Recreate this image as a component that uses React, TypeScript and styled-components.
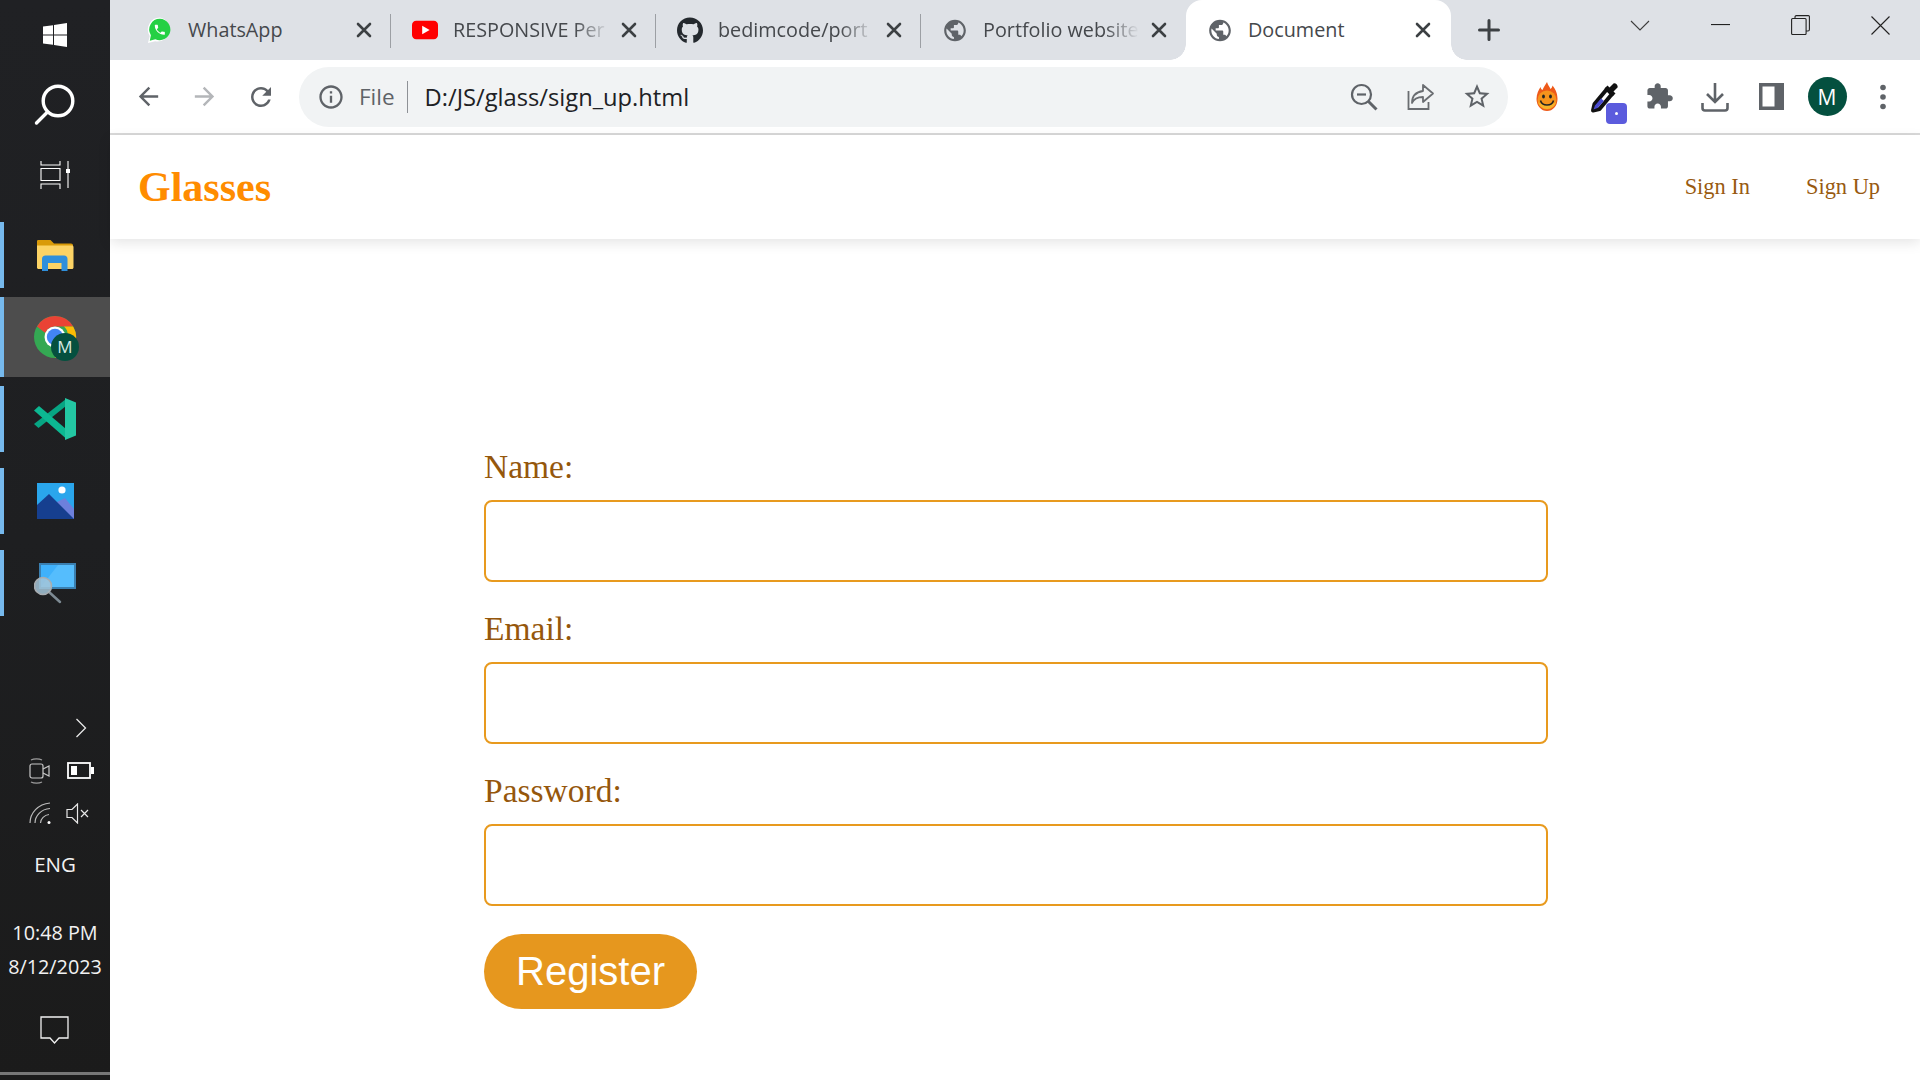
import React from "react";
import styled, { createGlobalStyle } from "styled-components";
import { FaGithub } from "react-icons/fa";

const Global = createGlobalStyle`
  html, body { margin: 0; padding: 0; height: 1080px; overflow: hidden; background: #fff; }
  * { box-sizing: border-box; }
`;

const UI = `"Open Sans", "Noto Sans", sans-serif`;
const SERIF = `"Liberation Serif", "Times New Roman", serif`;

const Desktop = styled.div`
  display: grid;
  grid-template-columns: 110px 1fr;
  width: 1920px;
  height: 1080px;
  overflow: hidden;
`;

/* ---------- Task bar ---------- */
const Rail = styled.aside`
  display: flex;
  flex-direction: column;
  background: linear-gradient(180deg, #202124 0%, #1e1f21 50%, #1b1b1b 100%);
  color: #fff;
  font-family: ${UI};
`;
const SystemButton = styled.div`
  height: 70px;
  display: flex;
  align-items: center;
  justify-content: center;
`;
const Apps = styled.div`
  margin-top: 4px;
  display: flex;
  flex-direction: column;
`;
const AppRow = styled.div`
  height: 82px;
  display: flex;
  align-items: center;
`;
const AppTile = styled.div<{ $active?: boolean }>`
  width: 100%;
  height: ${(p) => (p.$active ? 80 : 66)}px;
  display: flex;
  align-items: center;
  justify-content: center;
  border-left: 4px solid #76b9ed;
  padding-right: 4px;
  background: ${(p) => (p.$active ? "#4d4d4d" : "transparent")};
`;
const Tray = styled.div`
  margin-top: auto;
  display: flex;
  flex-direction: column;
  align-items: center;
`;
const TrayChevron = styled.div`
  width: 100%;
  height: 30px;
  padding-left: 75px;
  display: flex;
  align-items: center;
`;
const TrayRow = styled.div<{ $mt: number; $pr: number }>`
  margin-top: ${(p) => p.$mt}px;
  width: 100%;
  padding: 0 ${(p) => p.$pr}px 0 29px;
  display: flex;
  justify-content: space-between;
  align-items: center;
`;
const Lang = styled.div`
  margin-top: 25px;
  font-size: 20.5px;
  line-height: 28px;
  color: #f2f2f2;
`;
const Clock = styled.div`
  margin-top: 38px;
  font-size: 19.8px;
  line-height: 34px;
  text-align: center;
  color: #f2f2f2;
  white-space: nowrap;
`;
const Notify = styled.div`
  margin-top: 32px;
  height: 30px;
  display: flex;
  justify-content: center;
`;
const RailEnd = styled.div`
  margin-top: 26px;
  width: 100%;
  height: 8px;
  border-top: 3px solid #777;
`;

/* ---------- Browser ---------- */
const Browser = styled.div`
  display: flex;
  flex-direction: column;
  min-width: 0;
  background: #fff;
`;
const TabStrip = styled.div`
  height: 60px;
  flex: none;
  background: #dee1e6;
  display: flex;
  padding-left: 16px;
`;
const Tab = styled.div<{ $active?: boolean }>`
  position: relative;
  width: ${(p) => (p.$active ? 265 : 264)}px;
  height: 60px;
  flex: none;
  display: flex;
  align-items: center;
  padding: 0 ${(p) => (p.$active ? 18 : 16)}px 0 21px;
  background: ${(p) => (p.$active ? "#fff" : "transparent")};
  border-radius: ${(p) => (p.$active ? "16px 16px 0 0" : "0")};
  ${(p) =>
    p.$active
      ? `
    &::before, &::after {
      content: "";
      position: absolute;
      bottom: 0;
      width: 16px;
      height: 16px;
    }
    &::before { left: -16px; background: radial-gradient(circle at 0 0, transparent 15.5px, #fff 16px); }
    &::after { right: -16px; background: radial-gradient(circle at 100% 0, transparent 15.5px, #fff 16px); }
  `
      : ""}
`;
const Favicon = styled.span`
  width: 26px;
  height: 26px;
  flex: none;
  display: flex;
  align-items: center;
  justify-content: center;
  margin-right: 15px;
`;
const TabTitle = styled.span<{ $fade?: boolean }>`
  flex: 1;
  min-width: 0;
  white-space: nowrap;
  font-family: ${UI};
  font-size: 19.8px;
  line-height: 28px;
  color: #45484c;
  ${(p) =>
    p.$fade
      ? `-webkit-mask-image: linear-gradient(90deg, #000 78%, transparent 100%); mask-image: linear-gradient(90deg, #000 78%, transparent 100%);`
      : ""}
`;
const TabClose = styled.span`
  width: 20px;
  height: 20px;
  flex: none;
  margin-left: 10px;
  display: flex;
  align-items: center;
  justify-content: center;
`;
const TabDivider = styled.span<{ $on?: boolean }>`
  width: 1px;
  height: 34px;
  margin-top: 14px;
  flex: none;
  background: ${(p) => (p.$on ? "#9c9fa4" : "transparent")};
`;
const NewTab = styled.div`
  width: 24px;
  height: 60px;
  margin-left: 26px;
  display: flex;
  align-items: center;
  justify-content: center;
`;
const WindowControls = styled.div`
  margin-left: auto;
  display: flex;
  height: 50px;
  align-items: center;
`;
const WinButton = styled.div`
  width: 80px;
  display: flex;
  justify-content: center;
`;

const Toolbar = styled.div`
  height: 75px;
  flex: none;
  border-bottom: 2px solid #d9d9d9;
  display: flex;
  align-items: center;
  padding-left: 13px;
  background: #fff;
`;
const NavButtons = styled.div`
  display: flex;
  gap: 6.5px;
`;
const NavButton = styled.div`
  width: 50px;
  height: 50px;
  display: flex;
  align-items: center;
  justify-content: center;
`;
const Omnibox = styled.div`
  width: 1209px;
  height: 60px;
  flex: none;
  margin-left: 13px;
  border-radius: 30px;
  background: #f1f3f4;
  display: flex;
  align-items: center;
  padding: 0 16px 0 18px;
`;
const Scheme = styled.span`
  margin-left: 14px;
  font-family: ${UI};
  font-size: 22.5px;
  color: #5f6368;
  line-height: 32px;
  padding-right: 12px;
  border-right: 1.5px solid #8e9196;
  height: 32px;
`;
const Url = styled.span`
  margin-left: 17px;
  font-family: ${UI};
  font-size: 23.7px;
  line-height: 32px;
  color: #202124;
  white-space: nowrap;
`;
const OmniActions = styled.div`
  margin-left: auto;
  display: flex;
  gap: 26.5px;
`;
const OmniAction = styled.div`
  width: 30px;
  height: 30px;
  display: flex;
  align-items: center;
  justify-content: center;
`;
const Extensions = styled.div`
  margin-left: 11px;
  display: flex;
`;
const Extension = styled.div`
  position: relative;
  width: 56px;
  height: 50px;
  display: flex;
  align-items: center;
  justify-content: center;
`;
const ExtBadge = styled.span`
  position: absolute;
  left: 31px;
  top: 31px;
  width: 21px;
  height: 21px;
  border-radius: 4px;
  background: #5b5bdd;
  display: flex;
  align-items: center;
  justify-content: center;
  &::after {
    content: "";
    width: 3px;
    height: 3px;
    background: #fff;
    border-radius: 50%;
  }
`;
const Avatar = styled.span`
  width: 39px;
  height: 39px;
  border-radius: 50%;
  background: #04503f;
  color: #fff;
  font-family: ${UI};
  font-size: 21px;
  display: flex;
  align-items: center;
  justify-content: center;
`;

/* ---------- Page ---------- */
const Page = styled.main`
  flex: 1;
  display: flex;
  flex-direction: column;
  background: #fff;
`;
const Header = styled.header`
  height: 104px;
  flex: none;
  display: flex;
  align-items: center;
  justify-content: space-between;
  padding: 0 40px 0 28px;
  background: #fff;
  box-shadow: 0 4px 12px rgba(0, 0, 0, 0.1);
`;
const Logo = styled.div`
  font-family: ${SERIF};
  font-weight: 700;
  font-size: 42px;
  color: #ff8c00;
  line-height: 48px;
`;
const NavLinks = styled.nav`
  display: flex;
  gap: 56px;
`;
const NavLink = styled.a`
  font-family: ${SERIF};
  font-size: 22.4px;
  color: #985a10;
  text-decoration: none;
`;
const Form = styled.form`
  width: 1064px;
  margin: 208px 0 0 374px;
  display: flex;
  flex-direction: column;
`;
const Field = styled.div`
  display: flex;
  flex-direction: column;
  margin-bottom: 27.3px;
  &:last-of-type { margin-bottom: 28.3px; }
`;
const Label = styled.label`
  font-family: ${SERIF};
  font-size: 33.5px;
  line-height: 40px;
  margin-bottom: 13px;
  color: #95570c;
`;
const Input = styled.input`
  height: 81.7px;
  width: 100%;
  border: 2px solid #e89a1e;
  border-radius: 8px;
  background: #fff;
  outline: none;
`;
const Submit = styled.button`
  align-self: flex-start;
  width: 213px;
  height: 75px;
  border: none;
  border-radius: 37.5px;
  background: #e6971e;
  color: #fff;
  font-family: "Liberation Sans", Arial, sans-serif;
  font-size: 40px;
  padding: 0;
`;

/* ---------- Drawings ---------- */
const M = ({ d, size = 28, fill = "#5f6368" }: { d: string; size?: number; fill?: string }) => (
  <svg width={size} height={size} viewBox="0 0 24 24" fill={fill}>
    <path d={d} />
  </svg>
);
const GLOBE =
  "M12 2C6.48 2 2 6.48 2 12s4.48 10 10 10 10-4.48 10-10S17.52 2 12 2zm-1 17.93c-3.95-.49-7-3.85-7-7.93 0-.62.08-1.21.21-1.79L9 15v1c0 1.1.9 2 2 2v1.93zm6.9-2.54c-.26-.81-1-1.39-1.9-1.39h-1v-3c0-.55-.45-1-1-1H8v-2h2c.55 0 1-.45 1-1V7h2c1.1 0 2-.9 2-2v-.41c2.93 1.19 5 4.06 5 7.41 0 2.08-.8 3.97-2.1 5.39z";
const PHONE =
  "M6.62 10.79c1.44 2.83 3.76 5.14 6.59 6.59l2.2-2.2c.27-.27.67-.36 1.02-.24 1.12.37 2.33.57 3.57.57.55 0 1 .45 1 1V20c0 .55-.45 1-1 1-9.39 0-17-7.61-17-17 0-.55.45-1 1-1h3.5c.55 0 1 .45 1 1 0 1.25.2 2.45.57 3.57.11.35.03.74-.25 1.02l-2.2 2.2z";

const CloseGlyph = () => (
  <svg width="16" height="16" viewBox="0 0 16 16">
    <path d="M2 2l12 12M14 2L2 14" stroke="#3c4043" strokeWidth="2.6" fill="none" strokeLinecap="round" />
  </svg>
);
const WhatsAppIcon = () => (
  <svg width="32" height="34" viewBox="0 0 28 30">
    <path d="M14 1.5a13 13 0 0 0-11 20L1 29l7.8-2A13 13 0 1 0 14 1.5z" fill="#fff" />
    <path d="M14 3a11.5 11.5 0 0 0-9.8 17.6L3 26.6l6-1.6A11.5 11.5 0 1 0 14 3z" fill="#25d044" />
    <g transform="translate(6.6 7.6) scale(.6)">
      <path d={PHONE} fill="#fff" />
    </g>
  </svg>
);
const YouTubeIcon = () => (
  <svg width="28" height="20" viewBox="0 0 28 20">
    <rect width="28" height="20" rx="4.5" fill="#ff0000" />
    <path d="M11 5.5l8 4.5-8 4.5z" fill="#fff" />
  </svg>
);

const WindowsLogo = () => (
  <svg width="24" height="24" viewBox="0 0 24 24" fill="#fff">
    <path d="M0 3.6l10-1.4v9.2H0zM11 2l13-2v11.4H11zM0 12.5h10v9.3L0 20.4zM11 12.5h13V24l-13-1.9z" />
  </svg>
);
const SearchGlyph = () => (
  <svg width="44" height="44" viewBox="0 0 44 44" fill="none" stroke="#fff" strokeWidth="3.4" strokeLinecap="round">
    <circle cx="25" cy="18" r="14.8" />
    <path d="M14.5 29L3.5 40" />
  </svg>
);
const TaskView = () => (
  <svg width="30" height="28" viewBox="0 0 30 28" fill="none" stroke="#fff" strokeWidth="1.1">
    <path d="M1 0v4h19V0M1 7.5h19v12H1zM1 28v-5h19v5M28 0v27" />
    <rect x="26" y="8" width="4" height="4" fill="#fff" stroke="none" />
  </svg>
);
const FolderIcon = () => (
  <svg width="38" height="31" viewBox="0 1 38 31">
    <path d="M1 2.5C1 1.3 1.8.5 3 .5h11l4 4h17c1.2 0 2 .8 2 2V8H1z" fill="#d99a09" />
    <path d="M1 6.5h35c.8 0 1.5.7 1.5 1.5v20.5c0 .8-.7 1.5-1.5 1.5H2.500C1.700 30 1 29.3 1 28.5z" fill="#fcd365" />
    <path d="M6 32V20c0-2 1.3-3.5 3.5-3.5H28c2.200 0 3.500 1.500 3.500 3.500v12h-6v-8H12v8z" fill="#2f8fdc" />
  </svg>
);
const ChromeIcon = () => (
  <svg width="46" height="46" viewBox="-2 -2 46 46" overflow="visible">
    <circle cx="21" cy="21" r="21" fill="#34a853" />
    <path d="M21 0a21 21 0 0 1 18.2 10.5H21a10.5 10.5 0 0 0-9.700 6.500L3 10.500A21 21 0 0 1 21 0z" fill="#ea4335" />
    <path d="M39.2 10.5A21 21 0 0 1 21 42l9-15.500a10.500 10.500 0 0 0 0-16z" fill="#fbbc05" />
    <circle cx="21" cy="21" r="10.5" fill="#fff" />
    <circle cx="21" cy="21" r="8.2" fill="#4285f4" />
    <circle cx="31" cy="31" r="14" fill="#05503f" />
    <text x="31" y="37" fontSize="17" fontFamily="Open Sans, sans-serif" fill="#d7ebe4" textAnchor="middle">
      M
    </text>
  </svg>
);
const VSCodeIcon = () => (
  <svg width="42" height="42" viewBox="0 0 42 42">
    <path d="M0 26l4.5 4L32 8V1z" fill="#07a583" />
    <path d="M0 12.5L5 8l27 23v9.5z" fill="#0cb892" />
    <path d="M31 0l11 4.500v33L31 42z" fill="#23c7a3" />
  </svg>
);
const PhotosIcon = () => (
  <svg width="37" height="37" viewBox="0 2 37 37">
    <rect y="1" width="37" height="37" fill="#2aa6ec" />
    <circle cx="25" cy="9" r="3.6" fill="#fff" />
    <path d="M20 21l8-4 9 11v10H20z" fill="#6d80dc" />
    <path d="M0 24l12-11 25 25H0z" fill="#163f8f" />
  </svg>
);
const MagnifierIcon = () => (
  <svg width="43" height="41" viewBox="0 0 43 41">
    <rect x="5" y="0" width="37" height="26" fill="#3a7fb0" />
    <rect x="7" y="2" width="33" height="22" fill="#3fb1fb" />
    <path d="M7 24L24 2h16v22z" fill="#55bdfd" />
    <path d="M15 29l11 10" stroke="#7d8a93" strokeWidth="2.5" strokeLinecap="round" />
    <circle cx="9" cy="23" r="8.5" fill="#a5c6d8" fillOpacity=".85" stroke="#a8adb1" strokeWidth="1.6" />
  </svg>
);
const ChevronGlyph = () => (
  <svg width="12" height="20" viewBox="0 0 12 20" fill="none" stroke="#e8e8e8" strokeWidth="1.3">
    <path d="M1.5 1l9 9-9 9" />
  </svg>
);
const MeetGlyph = () => (
  <svg width="22" height="27" viewBox="0 0 22 27" fill="none" stroke="#9c9c9c" strokeWidth="1.2">
    <rect x="1" y="7" width="13" height="14" rx="2" stroke="#c8c8c8" />
    <path d="M14 12l6-3v10l-6-3" stroke="#c8c8c8" />
    <path d="M2 3c3-1.6 8-1.6 11 0M2 25c3 1.6 8 1.6 11 0" />
  </svg>
);
const BatteryGlyph = () => (
  <svg width="27" height="17" viewBox="0 0 27 17">
    <rect x="1" y="1" width="22" height="15" fill="none" stroke="#fff" strokeWidth="1.8" />
    <rect x="4" y="4" width="6" height="9" fill="#fff" />
    <rect x="24" y="5" width="3" height="7" fill="#fff" />
  </svg>
);
const WifiGlyph = () => (
  <svg width="24" height="24" viewBox="0 0 24 24" fill="none" stroke="#bbb" strokeWidth="1.2">
    <path d="M1 22C1 12 9 3 21 2M6 22c0-7 6-14 15-14.5M11.5 22c0-4 4-8 8.5-8.5" />
    <circle cx="20" cy="21.5" r="1.5" fill="#fff" stroke="none" />
  </svg>
);
const MuteGlyph = () => (
  <svg width="24" height="21" viewBox="0 0 24 21" fill="none" stroke="#e8e8e8" strokeWidth="1.2">
    <path d="M1 6.5h5L11.5 1v19L6 14.5H1zM15 7l7 7M22 7l-7 7" />
  </svg>
);
const NotifyGlyph = () => (
  <svg width="30" height="30" viewBox="0 0 30 30" fill="none" stroke="#f2f2f2" strokeWidth="1.3">
    <path d="M1 1h27v21H19l-4.5 5L10 22H1z" />
  </svg>
);

const SmallChevron = () => (
  <svg width="20" height="11" viewBox="0 0 20 11" fill="none" stroke="#3c3c3c" strokeWidth="1.1">
    <path d="M1 1l9 9 9-9" />
  </svg>
);
const MinGlyph = () => (
  <svg width="19" height="2" viewBox="0 0 19 2">
    <rect width="19" height="1.1" fill="#222" />
  </svg>
);
const MaxGlyph = () => (
  <svg width="19" height="20" viewBox="0 0 19 20" fill="none" stroke="#222" strokeWidth="1.1">
    <rect x=".6" y="3.5" width="14.5" height="16" rx="1" />
    <path d="M4 3.5V2c0-.8.6-1.4 1.4-1.4h12c.6 0 1 .4 1 1v13c0 .8-.6 1.4-1.4 1.4h-2" />
  </svg>
);
const XGlyph = () => (
  <svg width="19" height="19" viewBox="0 0 19 19" fill="none" stroke="#222" strokeWidth="1.1">
    <path d="M.5.5l18 18M18.5.5l-18 18" />
  </svg>
);
const ZoomOutGlyph = () => (
  <svg width="28" height="28" viewBox="0 0 28 28" fill="none" stroke="#5f6368" strokeWidth="2.2">
    <circle cx="11.5" cy="11.5" r="9.5" />
    <path d="M7 11.5h9" />
    <path d="M18.5 18.5l8 8" strokeWidth="3" />
  </svg>
);
const ShareGlyph = () => (
  <svg width="28" height="28" viewBox="0 0 28 28" fill="none" stroke="#6a6d71" strokeWidth="1.8">
    <path d="M1.5 8v18h20v-7" />
    <path d="M16 2l10 8.5L16 19v-5c-5 0-9 1.5-11 6 0-7 4-11 11-12z" strokeLinejoin="round" />
  </svg>
);
const HolaIcon = () => (
  <svg width="22" height="29" viewBox="0 0 22 29">
    <path d="M11 0c.8 3 2.5 4.5 3.500 7 1.200-.8 1.800-2 2-3.500 2.500 3 5 7 5 13.500a10.500 12 0 0 1-21 0C.5 12 2.500 8 4.500 5c.3 1.500 1 2.500 2 3C7.500 5 9.500 3 11 0z" fill="#ee5a1a" />
    <circle cx="11" cy="18" r="9.500" fill="#f6931c" />
    <path d="M2 20a9.300 9.300 0 0 0 18 0c-3 3-15 3-18 0z" fill="#f7b32b" />
    <ellipse cx="7.500" cy="14.500" rx="1.400" ry="2" fill="#222" />
    <ellipse cx="14.500" cy="14.500" rx="1.400" ry="2" fill="#222" />
    <path d="M4.500 18.500c1.500 6 11.500 6 13 0" fill="none" stroke="#222" strokeWidth="1.5" />
  </svg>
);
const DropperIcon = () => (
  <svg width="30" height="32" viewBox="-2 0 30 32">
    <path d="M17 8L4.500 23 3 29.500l6.500-1.500L22 13z" fill="#fff" stroke="#111" strokeWidth="4" strokeLinejoin="round" />
    <path d="M11 17.500l-6 7-1.500 4 4-1.500 6.500-7z" fill="#4a4ad0" />
    <path d="M14.500 7.500l8 8 3-3-2-2 4-4c1-2-2-5-4-4l-4 4-2-2z" fill="#111" />
  </svg>
);
const DownloadGlyph = () => (
  <svg width="28" height="30" viewBox="0 0 28 30" fill="none" stroke="#5f6368" strokeWidth="2.6">
    <path d="M14 1v18M6 12l8 8 8-8" />
    <path d="M1.500 21v5c0 1.500 1 2.500 2.500 2.500h20c1.500 0 2.500-1 2.500-2.500v-5" />
  </svg>
);
const PanelGlyph = () => (
  <svg width="25" height="27" viewBox="0 0 25 27">
    <rect width="25" height="27" fill="#5f6368" />
    <rect x="3.5" y="3.5" width="12" height="20" fill="#fff" />
  </svg>
);
const DotsGlyph = () => (
  <svg width="8" height="26" viewBox="0 0 8 26" fill="#5f6368">
    <circle cx="4" cy="3.5" r="2.8" />
    <circle cx="4" cy="13" r="2.8" />
    <circle cx="4" cy="22.5" r="2.8" />
  </svg>
);

const tabs = [
  { title: "WhatsApp", icon: <WhatsAppIcon />, fade: false, divider: true },
  { title: "RESPONSIVE Per", icon: <YouTubeIcon />, fade: true, divider: true },
  { title: "bedimcode/port", icon: <FaGithub size={27} color="#24292e" />, fade: true, divider: true },
  { title: "Portfolio website", icon: <M d={GLOBE} size={31} />, fade: true, divider: false },
];

export default function App() {
  return (
    <Desktop>
      <Global />
      <Rail>
        <SystemButton><WindowsLogo /></SystemButton>
        <SystemButton><SearchGlyph /></SystemButton>
        <SystemButton><TaskView /></SystemButton>
        <Apps>
          <AppRow><AppTile><FolderIcon /></AppTile></AppRow>
          <AppRow><AppTile $active><ChromeIcon /></AppTile></AppRow>
          <AppRow><AppTile><VSCodeIcon /></AppTile></AppRow>
          <AppRow><AppTile><PhotosIcon /></AppTile></AppRow>
          <AppRow><AppTile><MagnifierIcon /></AppTile></AppRow>
        </Apps>
        <Tray>
          <TrayChevron><ChevronGlyph /></TrayChevron>
          <TrayRow $mt={14} $pr={16}><MeetGlyph /><BatteryGlyph /></TrayRow>
          <TrayRow $mt={17} $pr={20}><WifiGlyph /><MuteGlyph /></TrayRow>
          <Lang>ENG</Lang>
          <Clock>10:48 PM<br />8/12/2023</Clock>
          <Notify><NotifyGlyph /></Notify>
          <RailEnd />
        </Tray>
      </Rail>
      <Browser>
        <TabStrip>
          {tabs.map((t) => (
            <React.Fragment key={t.title}>
              <Tab>
                <Favicon>{t.icon}</Favicon>
                <TabTitle $fade={t.fade}>{t.title}</TabTitle>
                <TabClose><CloseGlyph /></TabClose>
              </Tab>
              <TabDivider $on={t.divider} />
            </React.Fragment>
          ))}
          <Tab $active>
            <Favicon><M d={GLOBE} size={31} /></Favicon>
            <TabTitle>Document</TabTitle>
            <TabClose><CloseGlyph /></TabClose>
          </Tab>
          <NewTab>
            <svg width="22" height="22" viewBox="0 0 22 22" stroke="#3c4043" strokeWidth="3" strokeLinecap="round">
              <path d="M11 1.5v19M1.5 11h19" />
            </svg>
          </NewTab>
          <WindowControls>
            <WinButton><SmallChevron /></WinButton>
            <WinButton><MinGlyph /></WinButton>
            <WinButton><MaxGlyph /></WinButton>
            <WinButton><XGlyph /></WinButton>
          </WindowControls>
        </TabStrip>
        <Toolbar>
          <NavButtons>
            <NavButton><M d="M20 11H7.83l5.59-5.59L12 4l-8 8 8 8 1.41-1.41L7.83 13H20v-2z" size={29} /></NavButton>
            <NavButton><M d="M12 4l-1.41 1.41L16.17 11H4v2h12.17l-5.58 5.59L12 20l8-8z" size={29} fill="#b4b6b9" /></NavButton>
            <NavButton><M d="M17.65 6.35C16.2 4.9 14.21 4 12 4c-4.42 0-7.99 3.58-7.99 8s3.57 8 7.99 8c3.73 0 6.84-2.55 7.73-6h-2.08c-.82 2.33-3.04 4-5.65 4-3.31 0-6-2.69-6-6s2.69-6 6-6c1.66 0 3.14.69 4.22 1.78L13 11h7V4l-2.35 2.35z" size={30} /></NavButton>
          </NavButtons>
          <Omnibox>
            <M d="M11 7h2v2h-2zm0 4h2v6h-2zm1-9C6.48 2 2 6.48 2 12s4.48 10 10 10 10-4.48 10-10S17.52 2 12 2zm0 18c-4.41 0-8-3.59-8-8s3.59-8 8-8 8 3.59 8 8-3.59 8-8 8z" size={28} />
            <Scheme>File</Scheme>
            <Url>D:/JS/glass/sign_up.html</Url>
            <OmniActions>
              <OmniAction><ZoomOutGlyph /></OmniAction>
              <OmniAction><ShareGlyph /></OmniAction>
              <OmniAction><M d="M22 9.24l-7.19-.62L12 2 9.19 8.63 2 9.24l5.46 4.73L5.82 21 12 17.27 18.18 21l-1.63-7.03L22 9.24zM12 15.4l-3.76 2.27 1-4.28-3.32-2.88 4.38-.38L12 6.1l1.71 4.04 4.38.38-3.32 2.88 1 4.28L12 15.4z" size={31} /></OmniAction>
            </OmniActions>
          </Omnibox>
          <Extensions>
            <Extension><HolaIcon /></Extension>
            <Extension><DropperIcon /><ExtBadge /></Extension>
            <Extension><M d="M20.5 11H19V7c0-1.1-.9-2-2-2h-4V3.5C13 2.12 11.88 1 10.5 1S8 2.12 8 3.5V5H4c-1.1 0-1.99.9-1.99 2v3.8H3.5c1.49 0 2.7 1.21 2.7 2.7s-1.21 2.7-2.7 2.7H2V20c0 1.1.9 2 2 2h3.8v-1.5c0-1.49 1.21-2.7 2.7-2.7 1.49 0 2.7 1.21 2.7 2.7V22H17c1.1 0 2-.9 2-2v-4h1.5c1.38 0 2.5-1.12 2.5-2.5S21.88 11 20.5 11z" size={29} /></Extension>
            <Extension><DownloadGlyph /></Extension>
            <Extension><PanelGlyph /></Extension>
            <Extension><Avatar>M</Avatar></Extension>
            <Extension><DotsGlyph /></Extension>
          </Extensions>
        </Toolbar>
        <Page>
          <Header>
            <Logo>Glasses</Logo>
            <NavLinks>
              <NavLink href="#">Sign In</NavLink>
              <NavLink href="#">Sign Up</NavLink>
            </NavLinks>
          </Header>
          <Form onSubmit={(e) => e.preventDefault()}>
            <Field>
              <Label htmlFor="name">Name:</Label>
              <Input id="name" type="text" />
            </Field>
            <Field>
              <Label htmlFor="email">Email:</Label>
              <Input id="email" type="email" />
            </Field>
            <Field>
              <Label htmlFor="password">Password:</Label>
              <Input id="password" type="password" />
            </Field>
            <Submit type="submit">Register</Submit>
          </Form>
        </Page>
      </Browser>
    </Desktop>
  );
}
